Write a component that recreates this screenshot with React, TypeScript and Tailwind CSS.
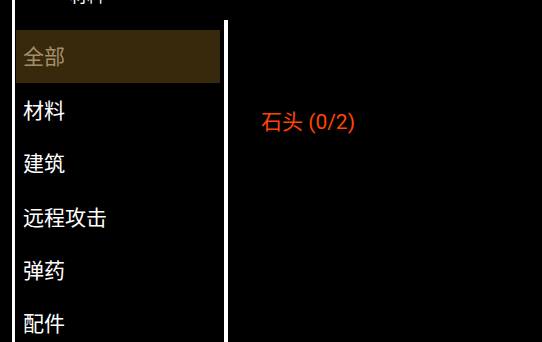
const categories = ["全部", "材料", "建筑", "远程攻击", "弹药", "配件"];

export default function App() {
  const selected = 0;

  return (
    <div className="flex h-[342px] w-[542px] overflow-hidden bg-black font-['Roboto','Noto_Sans_CJK_SC',sans-serif]">
      {/* category list */}
      <div className="ml-[12px] flex w-[212px] shrink-0 flex-col border-l-[3px] border-white">
        <div className="h-[30px] shrink-0">
          <div className="-mt-[12px] pl-[55px] text-[17px] leading-[17px] text-white">材料</div>
        </div>
        {categories.map((c, i) => (
          <div key={c} className="h-[53.4px] shrink-0 pl-[1px] pr-[4px]">
            <div
              className={
                i === selected
                  ? "flex h-full items-center bg-[#38290c] pl-[7px] pt-[3px] text-[21px] text-[#a58f69]"
                  : "flex h-full items-center pl-[7px] pt-[3px] text-[21px] text-white"
              }
            >
              {c}
            </div>
          </div>
        ))}
      </div>

      {/* scrollbar */}
      <div className="mt-[20px] w-[4px] shrink-0 bg-white" />

      {/* recipe detail */}
      <div className="pl-[33px] pt-[112px]">
        <p className="text-[21px] leading-[21px] text-[#ff4500]">石头 (0/2)</p>
      </div>
    </div>
  );
}
